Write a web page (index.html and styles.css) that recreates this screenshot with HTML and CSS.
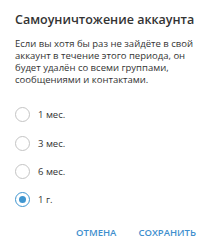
FILE: index.html
```html
<!DOCTYPE html>
<html lang="ru">
<head>
  <meta charset="UTF-8">
  <title>Самоуничтожение аккаунта</title>
  <link rel="stylesheet" href="styles.css">
</head>
<body>
  <div class="box">
    <h2>Самоуничтожение аккаунта</h2>
    <p class="note">Если вы хотя бы раз не зайдёте в свой аккаунт в течение этого периода, он будет удалён со всеми группами, сообщениями и контактами.</p>

    <div class="options">
      <label class="option"><span class="radio"></span>1 мес.</label>
      <label class="option"><span class="radio"></span>3 мес.</label>
      <label class="option"><span class="radio"></span>6 мес.</label>
      <label class="option checked"><span class="radio"></span>1 г.</label>
    </div>

    <div class="buttons">
      <button>Отмена</button>
      <button>Сохранить</button>
    </div>
  </div>
</body>
</html>
```

FILE: styles.css
```css
* {
  box-sizing: border-box;
}

body {
  margin: 0;
  background: #ffffff;
  font-family: 'Open Sans', sans-serif;
  color: #333333;
}

.box {
  padding: 12px 16px 0 15px;
}

.box h2 {
  margin: 0;
  font-size: 12.5px;
  font-weight: 600;
  line-height: 16px;
  color: #333333;
}

.note {
  margin: 9.5px 0 0;
  font-size: 9.5px;
  line-height: 12.3px;
  color: #333333;
}

.options {
  display: flex;
  flex-direction: column;
  gap: 13.3px;
  margin-top: 20.8px;
}

.option {
  display: flex;
  align-items: center;
  gap: 8px;
  font-size: 9.5px;
  height: 15px;
  color: #333333;
}

.radio {
  width: 15px;
  height: 15px;
  border: 1.5px solid #c4c4c4;
  border-radius: 50%;
  display: flex;
  align-items: center;
  justify-content: center;
}

.option.checked .radio {
  border-color: #3f96d0;
}

.option.checked .radio::after {
  content: '';
  width: 7px;
  height: 7px;
  border-radius: 50%;
  background: #3f96d0;
}

.buttons {
  display: flex;
  justify-content: flex-end;
  gap: 22px;
  margin-top: 19px;
  padding-right: 1px;
}

.buttons button {
  background: none;
  border: none;
  padding: 0;
  line-height: 13px;
  font-family: 'Open Sans', sans-serif;
  font-size: 9.5px;
  font-weight: 600;
  text-transform: uppercase;
  color: #3f8fce;
  cursor: pointer;
}
```
